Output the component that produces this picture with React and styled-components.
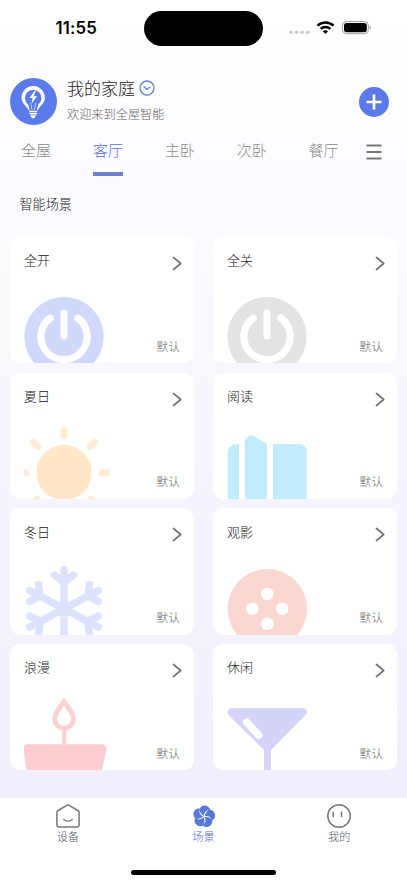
import React from 'react';
import styled, { createGlobalStyle } from 'styled-components';

const GlobalStyle = createGlobalStyle`
    * {
        box-sizing: border-box;
    }
    body {
        margin: 0;
        font-family: 'Noto Sans CJK SC', sans-serif;
        font-weight: 300;
    }
    svg {
        display: block;
        flex-shrink: 0;
    }
`;

const Screen = styled.div`
    width: 407px;
    height: 883px;
    display: flex;
    flex-direction: column;
    overflow: hidden;
    background: linear-gradient(#ffffff 0, #fcfbff 180px, #f6f5fe 480px, #f1effc 797px);
`;

const StatusBar = styled.div`
    height: 57px;
    padding: 11px 35px 0 55.5px;
    display: flex;
    align-items: flex-start;
`;

const Time = styled.div`
    width: 88.5px;
    padding-top: 7px;
    font-family: Inter, sans-serif;
    font-size: 16.8px;
    font-weight: 600;
    line-height: 20px;
    letter-spacing: 0.15px;
    color: #000;
`;

const Island = styled.div`
    width: 119px;
    height: 35px;
    border-radius: 18px;
    background: #000;
`;

const Signals = styled.div`
    margin-left: 26px;
    padding-top: 9px;
    display: flex;
    align-items: flex-start;
`;

const Header = styled.header`
    height: 77px;
    padding: 21px 18px 0 10px;
    display: flex;
    align-items: flex-start;
`;

const Greeting = styled.div`
    flex: 1;
    padding-left: 10px;
`;

const HomeName = styled.div`
    height: 19px;
    display: flex;
    align-items: center;
    gap: 4px;
    font-size: 17px;
    line-height: 19px;
    color: #222;
`;

const Welcome = styled.div`
    margin-top: 8px;
    font-size: 12.2px;
    line-height: 18px;
    color: #666;
`;

const AddButton = styled.button`
    width: 30px;
    height: 30px;
    margin-top: 9px;
    padding: 0;
    border: 0;
    border-radius: 50%;
    background: #5b7bea;
    display: flex;
    align-items: center;
    justify-content: center;
`;

const Tabs = styled.nav`
    height: 42px;
    padding: 5px 24px 0 21px;
    display: flex;
    align-items: flex-start;
`;

const Tab = styled.div`
    width: 71.9px;
    font-size: 15px;
    line-height: 22px;
    color: ${(props) => (props.$active ? '#5272d2' : '#8c8c8c')};

    &::after {
        content: '';
        display: block;
        width: 30px;
        height: 4px;
        margin-top: 10.5px;
        background: ${(props) => (props.$active ? '#6b7fcd' : 'transparent')};
    }
`;

const MenuIcon = styled.svg`
    margin: 5px 0 0 -14px;
`;

const SectionTitle = styled.h2`
    height: 61px;
    margin: 0;
    padding: 18px 0 0 19.5px;
    font-size: 13.1px;
    font-weight: 300;
    line-height: 20px;
    color: #222;
`;

const Grid = styled.main`
    flex: 1;
    padding: 0 10px;
    display: grid;
    grid-template-columns: 184px 184px;
    grid-auto-rows: 126.3px;
    align-content: start;
    column-gap: 19px;
    row-gap: 9.37px;
`;

const Card = styled.section`
    padding: 0 12px 0 14px;
    border-radius: 10px;
    overflow: hidden;
    background: #fff;
    display: flex;
    flex-direction: column;
`;

const CardHead = styled.div`
    height: 46px;
    padding-top: 13.3px;
    display: flex;
    justify-content: space-between;
    font-size: 13px;
    line-height: 20px;
    color: #222;

    svg {
        margin-top: 5.7px;
    }
`;

const CardFoot = styled.div`
    flex: 1;
    display: flex;
    justify-content: space-between;
    align-items: flex-end;
`;

const Tag = styled.span`
    padding: 0 2px 8.6px 0;
    font-size: 11.7px;
    line-height: 18px;
    color: #666;
`;

const TabBar = styled.footer`
    height: 85.3px;
    background: #fff;
    display: flex;
    flex-direction: column;
    align-items: center;
    justify-content: space-between;
    padding-bottom: 8px;
`;

const TabBarRow = styled.div`
    width: 100%;
    padding-top: 6.3px;
    display: flex;
`;

const TabBarItem = styled.div`
    flex: 1;
    display: flex;
    flex-direction: column;
    align-items: center;
    font-size: 11.2px;
    line-height: 16px;
    color: ${(props) => (props.$active ? '#4c6fd6' : '#54606c')};
`;

const HomeIndicator = styled.div`
    width: 145px;
    height: 5px;
    border-radius: 3px;
    background: #000;
`;

const Art = ({ children }) => (
    <svg width="88" height="80" viewBox="0 0 88 80" fill="none" strokeLinecap="round" strokeLinejoin="round">
        {children}
    </svg>
);

const Power = ({ color }) => (
    <Art>
        <circle cx="40" cy="53.7" r="39.7" fill={color} />
        <path d="M26.2 35A23.1 23.1 0 1 0 53.8 35M40 30v23" stroke="#fff" strokeWidth="7.2" />
    </Art>
);

const Sun = () => (
    <Art>
        <circle cx="40" cy="53.7" r="27.7" fill="#ffe7c7" />
        <path
            d="M40 11v5.5M9.8 23.7l3.7 3.7M70.2 23.7l-3.7 3.7M-2 54h4.3M78.2 54h4.6M13.5 79.8l-3.7 3.7M66.5 79.8l3.7 3.7"
            stroke="#ffead3"
            strokeWidth="6.8"
        />
    </Art>
);

const Books = () => (
    <Art>
        <g fill="#c1ecfb">
            <path d="M.7 80V34a9 9 0 0 1 9-9H12v55z" />
            <path d="M17.7 78V22.5c0-1.5.8-2.6 2-3.4l2.6-2c1.3-1 3-1 4.3-.2L38.4 24c1 .6 1.6 1.5 1.6 2.7V80H19.5z" />
            <path d="M46 80V25h26.7a7 7 0 0 1 7 7v48z" />
        </g>
    </Art>
);

const Snow = () => (
    <Art>
        <g transform="translate(40 53.8)" stroke="#dee3fd" strokeWidth="7.5">
            {[0, 62, 118, 180, 242, 298].map((angle) => (
                <path key={angle} transform={`rotate(${angle})`} d="M0 0V-39M-9.5-33.8L0-26.8l9.5-7" />
            ))}
        </g>
    </Art>
);

const Film = () => (
    <Art>
        <circle cx="40.3" cy="53.8" r="39.7" fill="#fcd6d0" />
        <g fill="#fff">
            <circle cx="40.3" cy="39" r="6.3" />
            <circle cx="25.4" cy="53.8" r="6.3" />
            <circle cx="55.2" cy="53.8" r="6.3" />
            <circle cx="40.3" cy="68.8" r="6.3" />
        </g>
    </Art>
);

const Candle = () => (
    <Art>
        <path
            d="M40 11.2c-3 5.2-9.2 11-9.2 17.8a9.3 9.3 0 0 0 18.6 0C49.4 22.2 43 16.4 40 11.2z"
            stroke="#fbd2d3"
            strokeWidth="4.9"
        />
        <path d="M40.2 40v16" stroke="#fbd2d3" strokeWidth="4.3" />
        <path d="M0 58a3.6 3.6 0 0 1 3.6-3.7H77.5c3.5 0 5.3 2.5 4.7 5.7L78 80H2.5C1 73 0 66 0 58z" fill="#fccdce" />
    </Art>
);

const Cocktail = () => (
    <Art>
        <path d="M4.5 18.3H76c3.8 0 5.3 4.2 2.7 6.8L44 60V80h-7V60L2.2 25.7C-.7 22.7.7 18.3 4.5 18.3z" fill="#d4d3f8" />
        <path d="M19.7 32.2L31.8 45.2" stroke="#fff" strokeWidth="7.3" />
    </Art>
);

const Bulb = () => (
    <svg width="47" height="47" viewBox="0 0 47 47" fill="none">
        <circle cx="23.5" cy="23.5" r="23.5" fill="#5b7bea" />
        <path
            d="M18.6 32.2C17.6 28.8 11.5 26 11.5 19.8a11.7 11.7 0 0 1 23.4 0C34.9 26 28.8 28.8 27.8 32.2L26.8 32.2 28.2 26.6A8.3 8.3 0 1 0 18.2 26.6L19.6 32.2z"
            fill="#fff"
        />
        <path d="M20.7 25l1.3 7M25.7 25l-1.3 7" stroke="#fff" strokeWidth=".6" />
        <path d="M24.6 12.8l-5 7.2h3.1l-1.1 5.6 5.4-7.4h-3.3l2.2-5.4z" fill="#fff" />
        <path d="M19.3 33.5h7.8M19.5 35.8h7.4" stroke="#fff" strokeWidth="1.6" />
        <path d="M20.3 37.3h5.8l-1.6 2.9h-2.6z" fill="#fff" />
    </svg>
);

const Chevron = () => (
    <svg width="10" height="15" viewBox="0 0 10 15" fill="none" stroke="#777" strokeWidth="1.8">
        <path d="M1.5 1.5l7.2 6-7.2 6" strokeLinecap="round" strokeLinejoin="round" />
    </svg>
);

const HouseIcon = () => (
    <svg width="24" height="24" viewBox="0 0 24 24" fill="none" stroke="#777" strokeWidth="1.5" strokeLinecap="round" strokeLinejoin="round">
        <path d="M.9 8.7c0-1 .4-1.7 1.3-2.2L10.8 1.3a2.3 2.3 0 0 1 2.4 0l8.6 5.2c.9.5 1.3 1.2 1.3 2.2v12.1a2.3 2.3 0 0 1-2.3 2.3H3.2A2.3 2.3 0 0 1 .9 20.8z" />
        <path d="M7.8 15.5c2.4 2 6 2 8.4 0" />
    </svg>
);

// five swirled petals, a thin gap left between neighbours
const FanIcon = () => (
    <svg width="24" height="24" viewBox="0 0 24 24">
        <g transform="translate(12 12.5)">
            {[0, 72, 144, 216, 288].map((angle) => (
                <path
                    key={angle}
                    transform={`rotate(${angle})`}
                    d="M-.2-.6C-1.6-1.8-4.2-4.2-4.9-6.6-4.3-9.3-2-11.2.8-11.1 3.7-11 5.9-9 6.1-6.7 2.9-6.6.3-4.5-.2-.6z"
                    fill="#5878d6"
                />
            ))}
        </g>
    </svg>
);

const FaceIcon = () => (
    <svg width="24" height="24" viewBox="0 0 24 24" fill="none" stroke="#777" strokeWidth="1.5">
        <circle cx="12" cy="12" r="11.2" />
        <path d="M6.3 8.3v4.2M14.5 8.3v4.2" strokeLinecap="round" />
    </svg>
);

const rooms = ['全屋', '客厅', '主卧', '次卧', '餐厅'];

const scenes = [
    { name: '全开', art: <Power color="#d0d8fb" /> },
    { name: '全关', art: <Power color="#e3e3e3" /> },
    { name: '夏日', art: <Sun /> },
    { name: '阅读', art: <Books /> },
    { name: '冬日', art: <Snow /> },
    { name: '观影', art: <Film /> },
    { name: '浪漫', art: <Candle /> },
    { name: '休闲', art: <Cocktail /> },
];

const pages = [
    { name: '设备', icon: <HouseIcon /> },
    { name: '场景', icon: <FanIcon />, active: true },
    { name: '我的', icon: <FaceIcon /> },
];

const App = () => {
    return (
        <>
            <GlobalStyle />
            <Screen>
                <StatusBar>
                    <Time>11:55</Time>
                    <Island />
                    <Signals>
                        <svg width="83" height="16" viewBox="0 0 83 16" fill="none">
                            <g fill="#c8c8c8">
                                <circle cx="1.9" cy="12.3" r="1.8" />
                                <circle cx="7.5" cy="12.3" r="1.8" />
                                <circle cx="13.1" cy="12.3" r="1.8" />
                                <circle cx="18.7" cy="12.3" r="1.8" />
                            </g>
                            <g stroke="#000" strokeWidth="2.5">
                                <path d="M28.5 5.6a11.6 11.6 0 0 1 16 0" />
                                <path d="M31.6 8.9a7 7 0 0 1 9.8 0" />
                            </g>
                            <path d="M33.9 11.3a3.9 3.9 0 0 1 5.2 0L36.5 14z" fill="#000" />
                            <rect x="53.4" y="1.5" width="26" height="12.2" rx="4" stroke="#a0a0a0" />
                            <rect x="55" y="3" width="22.8" height="9.2" rx="2.6" fill="#000" />
                            <path d="M80.7 5.7c1.7.6 1.7 3.2 0 3.8z" fill="#a0a0a0" />
                        </svg>
                    </Signals>
                </StatusBar>

                <Header>
                    <Bulb />
                    <Greeting>
                        <HomeName>
                            我的家庭
                            <svg width="16" height="16" viewBox="0 0 16 16" fill="none" stroke="#6a86d2" strokeWidth="1.4">
                                <circle cx="8" cy="8" r="7" />
                                <path d="M5.3 7L8 9.4 10.7 7" strokeLinecap="round" strokeLinejoin="round" />
                            </svg>
                        </HomeName>
                        <Welcome>欢迎来到全屋智能</Welcome>
                    </Greeting>
                    <AddButton>
                        <svg width="16" height="16" viewBox="0 0 16 16" stroke="#fff" strokeWidth="2.7">
                            <path d="M8 .5v15M.5 8h15" />
                        </svg>
                    </AddButton>
                </Header>

                <Tabs>
                    {rooms.map((room) => (
                        <Tab key={room} $active={room === '客厅'}>
                            {room}
                        </Tab>
                    ))}
                    <MenuIcon width="16" height="16" viewBox="0 0 16 16" stroke="#777" strokeWidth="2">
                        <path d="M.5 1.5h15M.5 8h15M.5 14.5h15" />
                    </MenuIcon>
                </Tabs>

                <SectionTitle>智能场景</SectionTitle>

                <Grid>
                    {scenes.map((scene) => (
                        <Card key={scene.name}>
                            <CardHead>
                                {scene.name}
                                <Chevron />
                            </CardHead>
                            <CardFoot>
                                {scene.art}
                                <Tag>默认</Tag>
                            </CardFoot>
                        </Card>
                    ))}
                </Grid>

                <TabBar>
                    <TabBarRow>
                        {pages.map((page) => (
                            <TabBarItem key={page.name} $active={page.active}>
                                {page.icon}
                                {page.name}
                            </TabBarItem>
                        ))}
                    </TabBarRow>
                    <HomeIndicator />
                </TabBar>
            </Screen>
        </>
    );
};

export default App;
